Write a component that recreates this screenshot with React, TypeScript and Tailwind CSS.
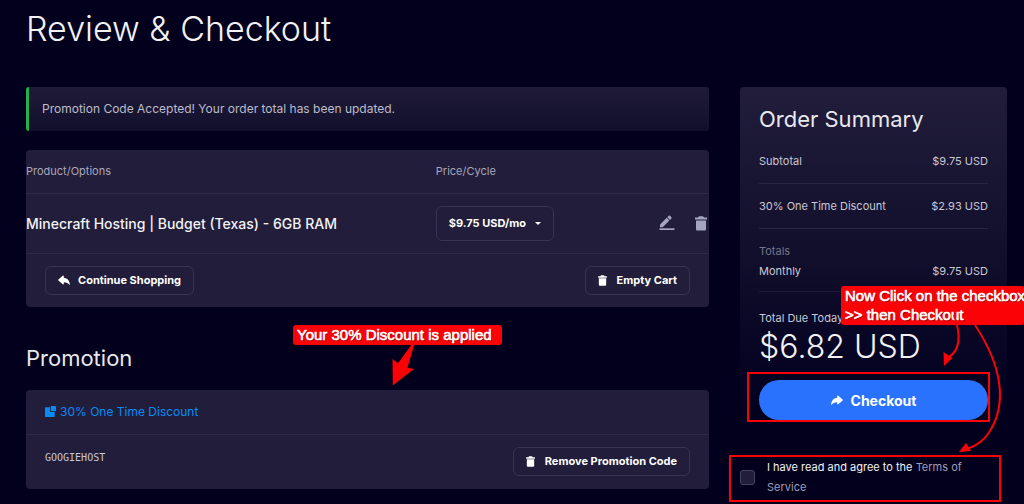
import React from "react";

function TrashIcon({ className }: { className: string }) {
  return (
    <svg viewBox="0 0 12 15" className={className} fill="currentColor" aria-hidden="true">
      <path d="M0 1.6h3L4 .3h4l1 1.3h3v2H0z" />
      <path d="M1 4.5h10v8.7c0 .8-.5 1.3-1.3 1.3H2.300c-.8 0-1.300-.5-1.300-1.300z" />
    </svg>
  );
}

function ArrowIcon({ className }: { className: string }) {
  return (
    <svg viewBox="0 0 12 11" className={className} fill="currentColor" aria-hidden="true">
      <path d="M6.200 1.200c0-.6.700-.9 1.100-.5l4.300 3.800c.3.300.3.700 0 1L7.300 9.300c-.4.400-1.100.1-1.100-.5V7.200C3.600 7.200 1.800 8 .600 9.800c-.2.200-.5.100-.5-.2C.4 5.700 2.600 3.200 6.200 2.800z" />
    </svg>
  );
}

function EditIcon() {
  return (
    <svg viewBox="0 0 16 16" className="h-4 w-4" fill="currentColor" aria-hidden="true">
      <path d="M1 12.200V9.500L7.700 2.800l2.700 2.700-6.700 6.700z" />
      <path d="M8.300 2.200l1.400-1.400c.4-.4.900-.4 1.300 0l1.400 1.400c.4.4.4.900 0 1.300l-1.400 1.400z" />
      <path d="M.5 13.300h15V15H.5z" />
    </svg>
  );
}

function PromoIcon() {
  return (
    <svg viewBox="0 0 11 11" className="h-[11px] w-[11px]" fill="currentColor" aria-hidden="true">
      <path d="M5.800.7c0-.4.300-.7.700-.7h3.800c.4 0 .7.300.7.700v3.800c0 .4-.3.700-.7.700H6.500c-.4 0-.7-.3-.7-.7z" />
      <path d="M.7 1.300H5v4c0 .4.300.700.700.700h4v4.300c0 .4-.3.700-.7.700H.7c-.4 0-.7-.3-.7-.7V2c0-.4.300-.7.700-.7z" />
    </svg>
  );
}

const outline =
  "flex h-[29px] items-center rounded-md border border-[#38354f] px-3 text-[11px] font-bold text-white";

const callout =
  "absolute rounded-[3px] bg-[#fb0207] pl-1 font-['Liberation_Sans',sans-serif] text-[15px] leading-[19px] whitespace-nowrap text-white [-webkit-text-stroke:0.6px_white] [text-shadow:1px_1px_1px_rgba(0,0,0,0.45)]";

function SummaryRow({ label, value }: { label: string; value: string }) {
  return (
    <div className="flex h-[45px] items-center justify-between border-b border-[#29263f]">
      <span>{label}</span>
      <span>{value}</span>
    </div>
  );
}

export default function App() {
  return (
    <main className="relative min-h-screen overflow-hidden bg-[#02001c] pr-[17px] pl-[26px] font-['Inter',sans-serif] text-[11px] text-[#c9c8d6]">
      <h1 className="text-[34px] leading-[58px] font-light text-[#f2f2f5]">Review &amp; Checkout</h1>

      <div className="mt-[29px] grid grid-cols-[minmax(0,1fr)_267px] items-start gap-x-[31px]">
        <div>
          <div
            role="status"
            className="flex h-11 items-center rounded-[3px] border-l-[3px] border-[#22b14c] bg-linear-to-b from-[#1f1b38] to-[#120f2c] pl-[13px] text-[12px] text-[#bdbccb]"
          >
            Promotion Code Accepted! Your order total has been updated.
          </div>

          <section className="mt-[19px] rounded bg-[#211d3a]">
            <table className="w-full table-fixed border-collapse text-left">
              <thead>
                <tr className="h-[43px] border-b border-[#2e2a46] text-[#a9a7ba]">
                  <th className="w-[60%] font-normal">Product/Options</th>
                  <th className="font-normal">Price/Cycle</th>
                  <th className="w-[60px]" aria-label="Actions"></th>
                </tr>
              </thead>
              <tbody>
                <tr className="h-[60px] border-b border-[#2e2a46]">
                  <td className="text-[14px] font-medium text-[#f2f2f5]">
                    Minecraft Hosting | Budget (Texas) - 6GB RAM
                  </td>
                  <td>
                    <div className="relative w-[118px]">
                      <select
                        aria-label="Billing cycle"
                        className="h-[35px] w-full appearance-none rounded-md border border-[#38354f] bg-transparent pl-3 text-[11px] font-bold text-white"
                      >
                        <option>$9.75 USD/mo</option>
                      </select>
                      <svg
                        viewBox="0 0 6 3"
                        className="pointer-events-none absolute top-4 right-[13px] h-[3px] w-[6px]"
                        fill="white"
                        aria-hidden="true"
                      >
                        <path d="M0 0h6L3 3z" />
                      </svg>
                    </div>
                  </td>
                  <td>
                    <div className="flex items-center justify-end gap-5 pr-0.5 text-[#a5a3c0]">
                      <button type="button" aria-label="Edit">
                        <EditIcon />
                      </button>
                      <button type="button" aria-label="Remove">
                        <TrashIcon className="h-[15px] w-3" />
                      </button>
                    </div>
                  </td>
                </tr>
              </tbody>
            </table>
            <div className="flex h-[53px] items-center justify-between px-[19px]">
              <a href="#shop" className={outline}>
                <ArrowIcon className="mr-2 h-[11px] w-3 -scale-x-100" />
                Continue Shopping
              </a>
              <button type="button" className={outline}>
                <TrashIcon className="mr-[10px] h-[11px] w-[9px]" />
                Empty Cart
              </button>
            </div>
          </section>

          <div className="relative mt-[37px]">
            <h2 className="text-[22px] leading-7 text-[#e8e8ee]">Promotion</h2>
            <div className={`${callout} -top-[19px] left-[267px] h-5 w-[209px]`}>
              Your 30% Discount is applied
            </div>
            <svg
              viewBox="0 0 24 42"
              className="absolute top-0 left-[366px] h-[42px] w-6"
              fill="#fb0207"
              aria-hidden="true"
            >
              <path d="M22.500 0L15.500 23.500L22 25L.800 41.500L.500 15L6 19.200L20 0z" />
            </svg>
          </div>

          <section className="mt-[18px] rounded bg-[#211d3a]">
            <div className="flex h-[45px] items-center gap-1 border-b border-[#2e2a46] px-[19px] text-[12px] text-[#078cf5]">
              <PromoIcon />
              30% One Time Discount
            </div>
            <div className="flex h-[54px] items-center justify-between px-[19px]">
              <code className="pb-2 font-['DejaVu_Sans_Mono',monospace] text-[10px]">GOOGIEHOST</code>
              <button type="button" className={outline}>
                <TrashIcon className="mr-[10px] h-[11px] w-[9px]" />
                Remove Promotion Code
              </button>
            </div>
          </section>
        </div>

        <aside className="relative">
          <section className="rounded bg-linear-to-b from-[#211d3a] via-[#110e2b] via-50% to-[#02001c] px-[19px] pt-[19px] pb-[19px]">
            <h2 className="mb-[7px] text-[22px] leading-[26px] text-[#e8e8ee]">Order Summary</h2>
            <SummaryRow label="Subtotal" value="$9.75 USD" />
            <SummaryRow label="30% One Time Discount" value="$2.93 USD" />
            <div className="border-b border-[#1d1a34] pt-3 pb-[10px] leading-5">
              <div className="text-[#777489]">Totals</div>
              <div className="flex justify-between">
                <span>Monthly</span>
                <span>$9.75 USD</span>
              </div>
            </div>
            <div className="pt-4 leading-5">Total Due Today</div>
            <div className="text-[32px] leading-[38px] font-light text-[#f2f2f5]">$6.82 USD</div>
            <button
              type="button"
              className="mt-[14px] flex h-10 w-full items-center justify-center gap-2 rounded-full bg-[#2972fe] text-[14px] font-bold text-white"
            >
              <ArrowIcon className="h-[11px] w-3" />
              Checkout
            </button>
          </section>

          <div className="mt-[18px] flex items-center gap-3 pr-3">
            <input
              id="terms"
              type="checkbox"
              className="h-[15px] w-[15px] shrink-0 appearance-none rounded-[3px] border border-[#44415c] bg-[#211d3a] checked:bg-[#2972fe]"
            />
            <label htmlFor="terms" className="leading-5 text-[#f2f2f5]">
              I have read and agree to the{" "}
              <a href="#terms-of-service" className="text-[#a09db8]">
                Terms of Service
              </a>
            </label>
          </div>

          <div className="pointer-events-none absolute top-[285px] left-[7px] h-[50px] w-[243px] border-2 border-[#fb0207]" />
          <div className="pointer-events-none absolute top-[368px] -left-[11px] h-[47px] w-[272px] border-2 border-[#fb0207]" />
          <div className={`${callout} top-[199px] -right-[17px] left-[101px] h-[39px]`}>
            Now Click on the checkbox
            <br />
            &gt;&gt; then Checkout
          </div>
          <svg
            viewBox="0 0 284 417"
            className="pointer-events-none absolute top-0 left-0 h-[417px] w-[284px]"
            fill="none"
            aria-hidden="true"
          >
            <path d="M214 228C222 250 219 264 209 270" stroke="#fb0207" strokeWidth="2" />
            <path d="M203.500 266l9 6-8.500 8z" fill="#fb0207" transform="translate(0 -1)" />
            <path d="M235 238C264 282 266 318 250 344C244 354 236 359 227 362" stroke="#fb0207" strokeWidth="2" />
            <path d="M219 365l7-9 5 8z" fill="#fb0207" />
          </svg>
        </aside>
      </div>
    </main>
  );
}
